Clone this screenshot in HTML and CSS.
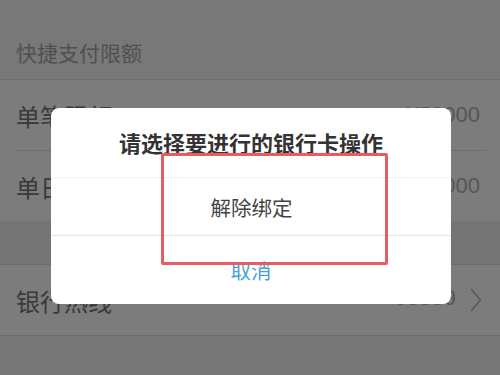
FILE: index.html
```html
<!DOCTYPE html>
<html lang="zh-CN">
<head>
<meta charset="utf-8">
<title>银行卡操作</title>
<link rel="stylesheet" href="styles.css">
</head>
<body>
<div class="page">
  <div class="section-head">快捷支付限额</div>
  <div class="group">
    <div class="row row-split">
      <span class="label">单笔限额</span>
      <span class="value">¥50000</span>
    </div>
    <div class="row">
      <span class="label">单日限额</span>
      <span class="value">¥50000</span>
    </div>
  </div>
  <div class="gap"></div>
  <div class="group group-bottom">
    <div class="row">
      <span class="label">银行热线</span>
      <span class="value-wrap">
        <span class="value">95559</span>
        <svg class="chevron" width="12" height="24" viewBox="0 0 12 24"><path d="M1.5 1.5 L10.5 12 L1.5 22.5" fill="none" stroke="currentColor" stroke-width="1.6" stroke-linecap="round" stroke-linejoin="round"/></svg>
      </span>
    </div>
  </div>
</div>

<div class="mask">
  <div class="dialog">
    <div class="dialog-title">请选择要进行的银行卡操作</div>
    <div class="dialog-option">解除绑定</div>
    <div class="dialog-cancel">取消</div>
  </div>
  <div class="annotation"></div>
</div>
</body>
</html>
```

FILE: styles.css
```css
html, body {
  margin: 0;
  padding: 0;
}

body {
  width: 500px;
  height: 375px;
  overflow: hidden;
  position: relative;
  font-family: "Noto Sans CJK SC", "Noto Sans", sans-serif;
  background: #f2f2f2;
}

.page {
  display: flex;
  flex-direction: column;
  height: 375px;
  background: #f2f2f2;
}

.section-head {
  height: 80px;
  box-sizing: border-box;
  padding: 24px 0 0 16px;
  display: flex;
  align-items: center;
  font-size: 21px;
  color: #a4a4a4;
  background: #f6f6f6;
  border-bottom: 1px solid #dedede;
}

.group {
  background: #ffffff;
  padding-left: 16px;
}

.group-bottom {
  border-bottom: 1px solid #dedede;
  padding-left: 16px;
}

.row {
  height: 70px;
  display: flex;
  align-items: center;
  justify-content: space-between;
  padding-right: 20px;
}

.row-split {
  border-bottom: 1px solid #e0e0e0;
  margin-right: 14px;
  padding-right: 6px;
}

.label {
  font-size: 24px;
  color: #767676;
}

.value {
  font-family: "Liberation Sans", "Noto Sans", sans-serif;
  font-size: 22px;
  color: #b2b2b2;
}

.value-wrap {
  display: flex;
  align-items: center;
  gap: 14px;
  margin-right: -2px;
}

.value-wrap .value {
  margin-top: -4px;
}

.chevron {
  color: #b4b4b4;
  display: block;
}

.gap {
  height: 43px;
  background: #eeeeee;
  border-bottom: 1px solid #dedede;
}

.mask {
  position: absolute;
  inset: 0;
  background: rgba(0, 0, 0, 0.515);
  padding-top: 108px;
  box-sizing: border-box;
}

.dialog {
  width: 400px;
  height: 196px;
  margin-left: 51px;
  background: #ffffff;
  border-radius: 8px;
  display: flex;
  flex-direction: column;
  overflow: hidden;
}

.dialog-title {
  height: 70px;
  box-sizing: border-box;
  display: flex;
  align-items: center;
  justify-content: center;
  padding-bottom: 2px;
  font-size: 22px;
  font-weight: bold;
  color: #333333;
  border-bottom: 1px solid #f0f0f0;
}

.dialog-option {
  height: 57px;
  display: flex;
  align-items: center;
  justify-content: center;
  padding-left: 1px;
  font-size: 20.5px;
  color: #444444;
  border-bottom: 1px solid #e6e6e6;
}

.dialog-cancel {
  flex: 1;
  display: flex;
  align-items: center;
  justify-content: center;
  font-size: 20.5px;
  color: #4a9fdb;
}

.annotation {
  position: absolute;
  left: 161px;
  top: 153px;
  width: 227px;
  height: 112px;
  box-sizing: border-box;
  border: 3px solid #e65d5f;
  border-radius: 2px;
}
```
